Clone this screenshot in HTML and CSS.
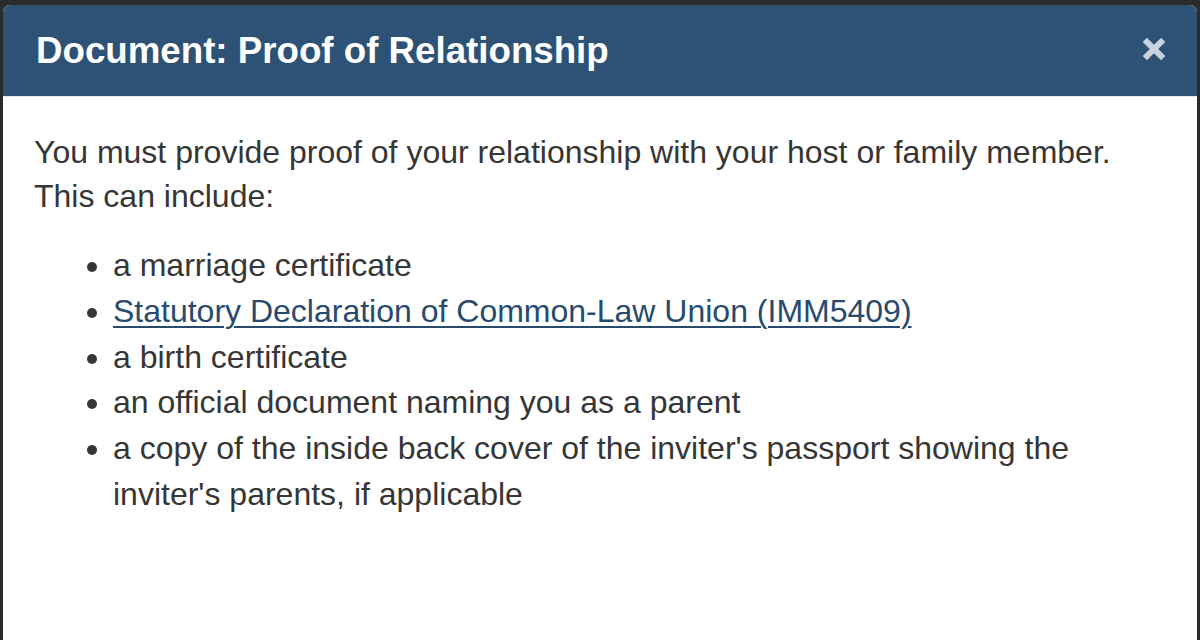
FILE: index.html
```html
<!DOCTYPE html>
<html lang="en">
<head>
<meta charset="utf-8">
<title>Document: Proof of Relationship</title>
<link rel="stylesheet" href="styles.css">
</head>
<body>
<div class="modal">
  <div class="modal-header">
    <h2 class="modal-title">Document: Proof of Relationship</h2>
    <button class="close" aria-label="Close">
      <svg width="26" height="26" viewBox="0 0 26 26"><path d="M3.8 3.8 L22.2 22.2 M22.2 3.8 L3.8 22.2" stroke="#c8d3df" stroke-width="6" stroke-linecap="butt" fill="none"/></svg>
    </button>
  </div>
  <div class="modal-body">
    <p class="intro">You must provide proof of your relationship with your host or family member. This can include:</p>
    <ul class="docs">
      <li>a marriage certificate</li>
      <li><a href="#">Statutory Declaration of Common-Law Union (IMM5409)</a></li>
      <li>a birth certificate</li>
      <li>an official document naming you as a parent</li>
      <li>a copy of the inside back cover of the inviter's passport showing the inviter's parents, if applicable</li>
    </ul>
  </div>
</div>
</body>
</html>
```

FILE: styles.css
```css
html, body {
  margin: 0;
  padding: 0;
  height: 100%;
  overflow: hidden;
}
body {
  background: #2b2b2b;
  font-family: "Liberation Sans", Arial, sans-serif;
}
.modal {
  margin: 5px 3px 0 3px;
  background: #ffffff;
  border-radius: 7px 7px 0 0;
  overflow: hidden;
  height: calc(100vh - 5px);
}
.modal-header {
  height: 92px;
  box-sizing: border-box;
  background: #2d5276;
  border-bottom: 1px solid #e3eaf3;
  display: flex;
  align-items: center;
  justify-content: space-between;
  padding: 0 30px 0 33px;
}
.modal-title {
  margin: 0;
  color: #ffffff;
  font-size: 36.7px;
  font-weight: bold;
  line-height: 1;
  padding-top: 1px;
}
.close {
  background: none;
  border: 0;
  padding: 0;
  width: 26px;
  height: 26px;
  cursor: pointer;
  display: flex;
  margin-top: -4px;
}
.modal-body {
  padding: 33px 40px 0 31px;
  color: #363636;
  font-size: 32px;
}
.intro {
  margin: 0;
  line-height: 44px;
}
.docs {
  margin: 25px 0 0 0;
  padding-left: 79px;
  line-height: 45.8px;
}
.docs a {
  color: #284a6e;
  text-decoration: underline;
  text-underline-offset: 4px;
  text-decoration-thickness: 2px;
}
```
